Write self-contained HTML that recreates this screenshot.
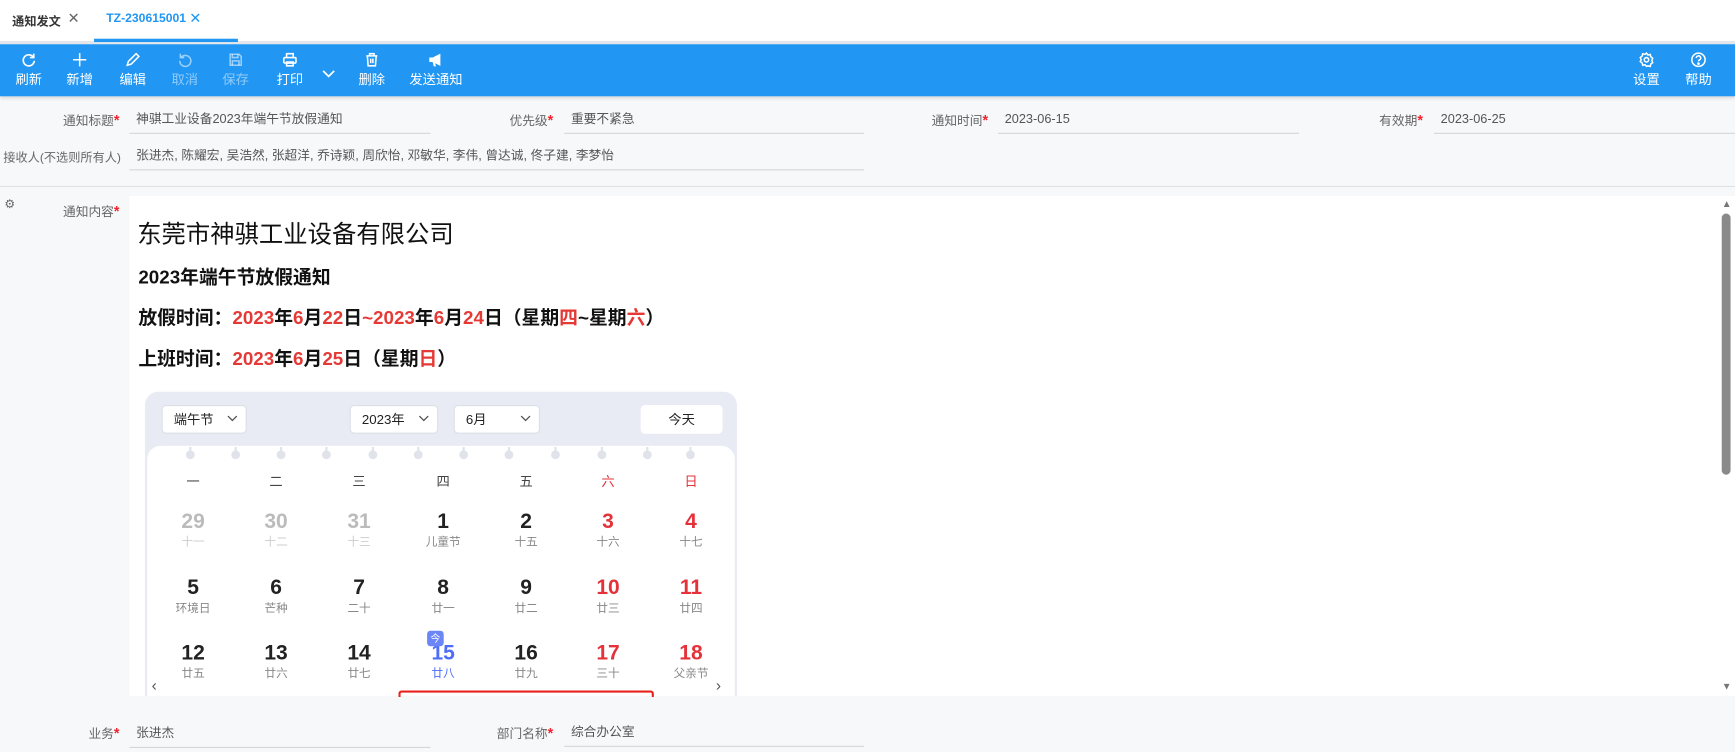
<!DOCTYPE html>
<html><head><meta charset="utf-8"><style>
*{margin:0;padding:0;box-sizing:border-box}
html,body{width:1735px;height:752px;overflow:hidden;background:#f7f8fa}
body{font-family:"Liberation Sans","Noto Sans CJK SC",sans-serif}
#w{position:absolute;left:0;top:0;width:1568px;height:680px;transform:scale(1.1065);transform-origin:0 0;background:#f7f8fa}
.a{position:absolute;white-space:nowrap}
.tb{position:absolute;top:40px;left:0;width:1568px;height:47px;background:#2196f3;box-shadow:0 2px 3px rgba(0,0,0,.12)}
.btn{position:absolute;top:7px;width:50px;margin-left:-25px;text-align:center;color:#fff;font-size:12px}
.btn svg{display:block;margin:0 auto 2px;width:14px;height:14px}
.btn.d{color:rgba(255,255,255,.5)}
.lab{position:absolute;font-size:11.5px;color:#666;text-align:right;white-space:nowrap}
.lab b{color:#f5222d;font-weight:bold;font-size:13px}
.inp{position:absolute;height:22px;border-bottom:1px solid #d4d6da;font-size:11.5px;color:#555;padding-left:6px;line-height:18px;white-space:nowrap}
.h{font-weight:bold;font-size:17px;color:#111}
.r{color:#e53935}
.col{position:absolute;width:75px;text-align:center;margin-left:-37px}
.n{font-size:19px;font-weight:bold;color:#222;line-height:22px}
.l{font-size:10.5px;color:#888;line-height:14px}
.g .n{color:#bbb}.g .l{color:#ccc}
.rd .n{color:#e5323a}
.sel{position:absolute;top:12px;height:26px;background:#fff;border:1px solid #dcdfe6;border-radius:4px;font-size:12px;color:#222;line-height:24px;padding-left:10px}
.sel svg{position:absolute;right:7px;top:8px}
</style></head><body><div id="w">
<div class="a" style="left:0;top:0;width:1568px;height:38px;background:#fff"></div>
<div class="a" style="left:0;top:37px;width:1568px;height:3px;background:#e4e6ea"></div>
<div class="a" style="left:11px;top:11px;font-size:11px;color:#333;font-weight:bold">通知发文</div>
<div class="a" style="left:61px;top:9px;font-size:13px;color:#666">✕</div>
<div class="a" style="left:96px;top:11px;font-size:11px;color:#2196f3;font-weight:bold">TZ-230615001</div>
<div class="a" style="left:171px;top:9px;font-size:13px;color:#2196f3">✕</div>
<div class="a" style="left:85px;top:35px;width:130px;height:3px;background:#2196f3"></div>

<div class="tb">
<div class="btn" style="left:26px"><svg viewBox="0 0 14 14" fill="none" stroke="#fff" stroke-width="1.5"><path d="M11 4.5A5 5 0 1 0 12 8"/><path d="M11.5 1.5v3.5H8"/></svg>刷新</div>
<div class="btn" style="left:72px"><svg viewBox="0 0 14 14" stroke="#fff" stroke-width="1.4"><path d="M7 1v12M1 7h12"/></svg>新增</div>
<div class="btn" style="left:120px"><svg viewBox="0 0 14 14" fill="none" stroke="#fff" stroke-width="1.4"><path d="M2 12l1-3.5 7-7 2.5 2.5-7 7z"/></svg>编辑</div>
<div class="btn d" style="left:167px"><svg viewBox="0 0 14 14" fill="none" stroke="rgba(255,255,255,.55)" stroke-width="1.4"><path d="M4 4.5A5 5 0 1 1 2.5 8"/><path d="M3 1.5V5h3.5"/></svg>取消</div>
<div class="btn d" style="left:213px"><svg viewBox="0 0 14 14" fill="none" stroke="rgba(255,255,255,.55)" stroke-width="1.4"><path d="M2 2h8l2 2v8H2z"/><path d="M4 2v3h5V2M4 12V8h6v4"/></svg>保存</div>
<div class="btn" style="left:262px"><svg viewBox="0 0 14 14" fill="none" stroke="#fff" stroke-width="1.4"><path d="M4 5V1.5h6V5"/><rect x="1.5" y="5" width="11" height="5" rx="1"/><path d="M4 9h6v3.5H4z"/></svg>打印</div>
<div class="a" style="left:291px;top:18px"><svg width="12" height="8" viewBox="0 0 12 8" fill="none" stroke="#fff" stroke-width="1.6"><path d="M1 1l5 5 5-5"/></svg></div>
<div class="btn" style="left:336px"><svg viewBox="0 0 14 14" fill="none" stroke="#fff" stroke-width="1.4"><path d="M2 3.5h10M5 3.5V1.5h4v2M3 3.5l.7 9h6.6l.7-9M6 6v4M8 6v4"/></svg>删除</div>
<div class="btn" style="left:394px;width:60px;margin-left:-30px"><svg viewBox="0 0 14 14" fill="#fff"><path d="M1 5h3l7-3.5v11L4 9H1z"/><path d="M4 9l1 4h2L6 9z"/></svg>发送通知</div>
<div class="btn" style="left:1488px"><svg viewBox="0 0 14 14" fill="none" stroke="#fff" stroke-width="1.4"><circle cx="7" cy="7" r="2"/><path d="M7 1l1.3 1.7 2.1-.5.5 2.1L12.6 5.6 11.8 7.6l.8 2-1.7 1.3-.5 2.1-2.1-.5L7 13l-1.3-1.5-2.1.5-.5-2.1L1.4 8.6 2.2 7 1.4 5l1.7-1.3.5-2.1 2.1.5z"/></svg>设置</div>
<div class="btn" style="left:1535px"><svg viewBox="0 0 14 14" fill="none" stroke="#fff" stroke-width="1.4"><circle cx="7" cy="7" r="6"/><path d="M5 5.5a2 2 0 1 1 2.5 1.9c-.4.2-.5.5-.5 1.1"/><circle cx="7" cy="10.5" r=".5" fill="#fff"/></svg>帮助</div>
</div>

<div class="lab" style="right:1460px;top:101px">通知标题<b>*</b></div>
<div class="inp" style="left:117px;top:99px;width:272px">神骐工业设备2023年端午节放假通知</div>
<div class="lab" style="right:1068px;top:101px">优先级<b>*</b></div>
<div class="inp" style="left:510px;top:99px;width:271px">重要不紧急</div>
<div class="lab" style="right:675px;top:101px">通知时间<b>*</b></div>
<div class="inp" style="left:902px;top:99px;width:272px">2023-06-15</div>
<div class="lab" style="right:282px;top:101px">有效期<b>*</b></div>
<div class="inp" style="left:1296px;top:99px;width:272px">2023-06-25</div>
<div class="lab" style="left:3px;top:134px;font-size:11px">接收人(不选则所有人)</div>
<div class="inp" style="left:117px;top:132px;width:664px">张进杰, 陈耀宏, 吴浩然, 张超洋, 乔诗颖, 周欣怡, 邓敏华, 李伟, 曾达诚, 佟子建, 李梦怡</div>
<div class="a" style="left:0;top:168px;width:1568px;height:1px;background:#dfe1e5"></div>

<div class="a" style="left:4px;top:178px;font-size:11px;color:#666">⚙</div>
<div class="lab" style="right:1460px;top:183px">通知内容<b>*</b></div>
<div class="a" style="left:117px;top:177px;width:1451px;height:452px;background:#fff;overflow:hidden">
 <div class="a" style="left:7px;top:17px;font-size:22px;color:#111">东莞市神骐工业设备有限公司</div>
 <div class="a h" style="left:8px;top:59px">2023年端午节放假通知</div>
 <div class="a h" style="left:8px;top:96px">放假时间：<span class="r">2023</span>年<span class="r">6</span>月<span class="r">22</span>日<span class="r">~2023</span>年<span class="r">6</span>月<span class="r">24</span>日（星期<span class="r">四</span>~星期<span class="r">六</span>）</div>
 <div class="a h" style="left:8px;top:133px">上班时间：<span class="r">2023</span>年<span class="r">6</span>月<span class="r">25</span>日（星期<span class="r">日</span>）</div>
 <div class="a" style="left:1439px;top:2px;font-size:9px;color:#777">▲</div>
 <div class="a" style="left:1439px;top:16px;width:8px;height:236px;background:#8a8a8a;border-radius:4px"></div>
 <div class="a" style="left:1439px;top:438px;font-size:9px;color:#777">▼</div>
 <div class="a" style="left:14px;top:177px;width:535px;height:300px;background:#e8ebf3;border-radius:12px">
  <div class="sel" style="left:15px;width:77px">端午节<svg width="10" height="6" viewBox="0 0 10 6" fill="none" stroke="#555" stroke-width="1.2"><path d="M1 1l4 4 4-4"/></svg></div>
  <div class="sel" style="left:185px;width:80px">2023年<svg width="10" height="6" viewBox="0 0 10 6" fill="none" stroke="#555" stroke-width="1.2"><path d="M1 1l4 4 4-4"/></svg></div>
  <div class="sel" style="left:279px;width:78px">6月<svg width="10" height="6" viewBox="0 0 10 6" fill="none" stroke="#555" stroke-width="1.2"><path d="M1 1l4 4 4-4"/></svg></div>
  <div class="sel" style="left:448px;width:74px;border-color:#fff;text-align:center;padding-left:0">今天</div>
  <div class="a" style="left:2px;top:49px;width:531px;height:260px;background:#fff;border-radius:12px 12px 0 0"></div>
 </div>
</div>
<div class="a" style="left:360px;top:624px;width:231px;height:6px;border:2px solid #e8231f;border-bottom:none;border-radius:3px 3px 0 0"></div>

<div class="lab" style="right:1460px;top:655px">业务<b>*</b></div>
<div class="inp" style="left:117px;top:654px;width:272px">张进杰</div>
<div class="lab" style="right:1068px;top:655px">部门名称<b>*</b></div>
<div class="inp" style="left:510px;top:653px;width:271px">综合办公室</div>

<div style="position:absolute;left:117px;top:177px">
<div class="a" style="left:51px;top:226px;width:460px;height:10px">
<svg width="460" height="12"><g fill="#e0e3ea" stroke="#e0e3ea" stroke-width="2">
<circle cx="4" cy="7" r="3"/><line x1="4" y1="0" x2="4" y2="5"/>
<circle cx="45" cy="7" r="3"/><line x1="45" y1="0" x2="45" y2="5"/>
<circle cx="86" cy="7" r="3"/><line x1="86" y1="0" x2="86" y2="5"/>
<circle cx="127" cy="7" r="3"/><line x1="127" y1="0" x2="127" y2="5"/>
<circle cx="169" cy="7" r="3"/><line x1="169" y1="0" x2="169" y2="5"/>
<circle cx="210" cy="7" r="3"/><line x1="210" y1="0" x2="210" y2="5"/>
<circle cx="251" cy="7" r="3"/><line x1="251" y1="0" x2="251" y2="5"/>
<circle cx="292" cy="7" r="3"/><line x1="292" y1="0" x2="292" y2="5"/>
<circle cx="334" cy="7" r="3"/><line x1="334" y1="0" x2="334" y2="5"/>
<circle cx="376" cy="7" r="3"/><line x1="376" y1="0" x2="376" y2="5"/>
<circle cx="417" cy="7" r="3"/><line x1="417" y1="0" x2="417" y2="5"/>
<circle cx="456" cy="7" r="3"/><line x1="456" y1="0" x2="456" y2="5"/>
</g></svg></div>
<div class="col" style="left:57px;top:249px;font-size:12px;color:#444">一</div>
<div class="col" style="left:132px;top:249px;font-size:12px;color:#444">二</div>
<div class="col" style="left:207px;top:249px;font-size:12px;color:#444">三</div>
<div class="col" style="left:283px;top:249px;font-size:12px;color:#444">四</div>
<div class="col" style="left:358px;top:249px;font-size:12px;color:#444">五</div>
<div class="col" style="left:432px;top:249px;font-size:12px;color:#e5323a">六</div>
<div class="col" style="left:507px;top:249px;font-size:12px;color:#e5323a">日</div>
<div class="col g" style="left:57px;top:284px"><div class="n">29</div><div class="l">十一</div></div>
<div class="col g" style="left:132px;top:284px"><div class="n">30</div><div class="l">十二</div></div>
<div class="col g" style="left:207px;top:284px"><div class="n">31</div><div class="l">十三</div></div>
<div class="col" style="left:283px;top:284px"><div class="n">1</div><div class="l">儿童节</div></div>
<div class="col" style="left:358px;top:284px"><div class="n">2</div><div class="l">十五</div></div>
<div class="col rd" style="left:432px;top:284px"><div class="n">3</div><div class="l">十六</div></div>
<div class="col rd" style="left:507px;top:284px"><div class="n">4</div><div class="l">十七</div></div>
<div class="col" style="left:57px;top:344px"><div class="n">5</div><div class="l">环境日</div></div>
<div class="col" style="left:132px;top:344px"><div class="n">6</div><div class="l">芒种</div></div>
<div class="col" style="left:207px;top:344px"><div class="n">7</div><div class="l">二十</div></div>
<div class="col" style="left:283px;top:344px"><div class="n">8</div><div class="l">廿一</div></div>
<div class="col" style="left:358px;top:344px"><div class="n">9</div><div class="l">廿二</div></div>
<div class="col rd" style="left:432px;top:344px"><div class="n">10</div><div class="l">廿三</div></div>
<div class="col rd" style="left:507px;top:344px"><div class="n">11</div><div class="l">廿四</div></div>
<div class="col" style="left:57px;top:403px"><div class="n">12</div><div class="l">廿五</div></div>
<div class="col" style="left:132px;top:403px"><div class="n">13</div><div class="l">廿六</div></div>
<div class="col" style="left:207px;top:403px"><div class="n">14</div><div class="l">廿七</div></div>
<div class="col" style="left:283px;top:403px"><div class="n" style="color:#4f6ef7">15</div><div class="l" style="color:#4f6ef7">廿八</div></div>
<div class="a" style="left:269px;top:393px;width:15px;height:14px;background:#6b86f7;border-radius:3px;color:#fff;font-size:9px;text-align:center;line-height:14px">今</div>
<div class="col" style="left:358px;top:403px"><div class="n">16</div><div class="l">廿九</div></div>
<div class="col rd" style="left:432px;top:403px"><div class="n">17</div><div class="l">三十</div></div>
<div class="col rd" style="left:507px;top:403px"><div class="n">18</div><div class="l">父亲节</div></div>
<div class="a" style="left:20px;top:434px;font-size:14px;color:#555">‹</div>
<div class="a" style="left:530px;top:434px;font-size:14px;color:#555">›</div>
</div>
</div></body></html>
